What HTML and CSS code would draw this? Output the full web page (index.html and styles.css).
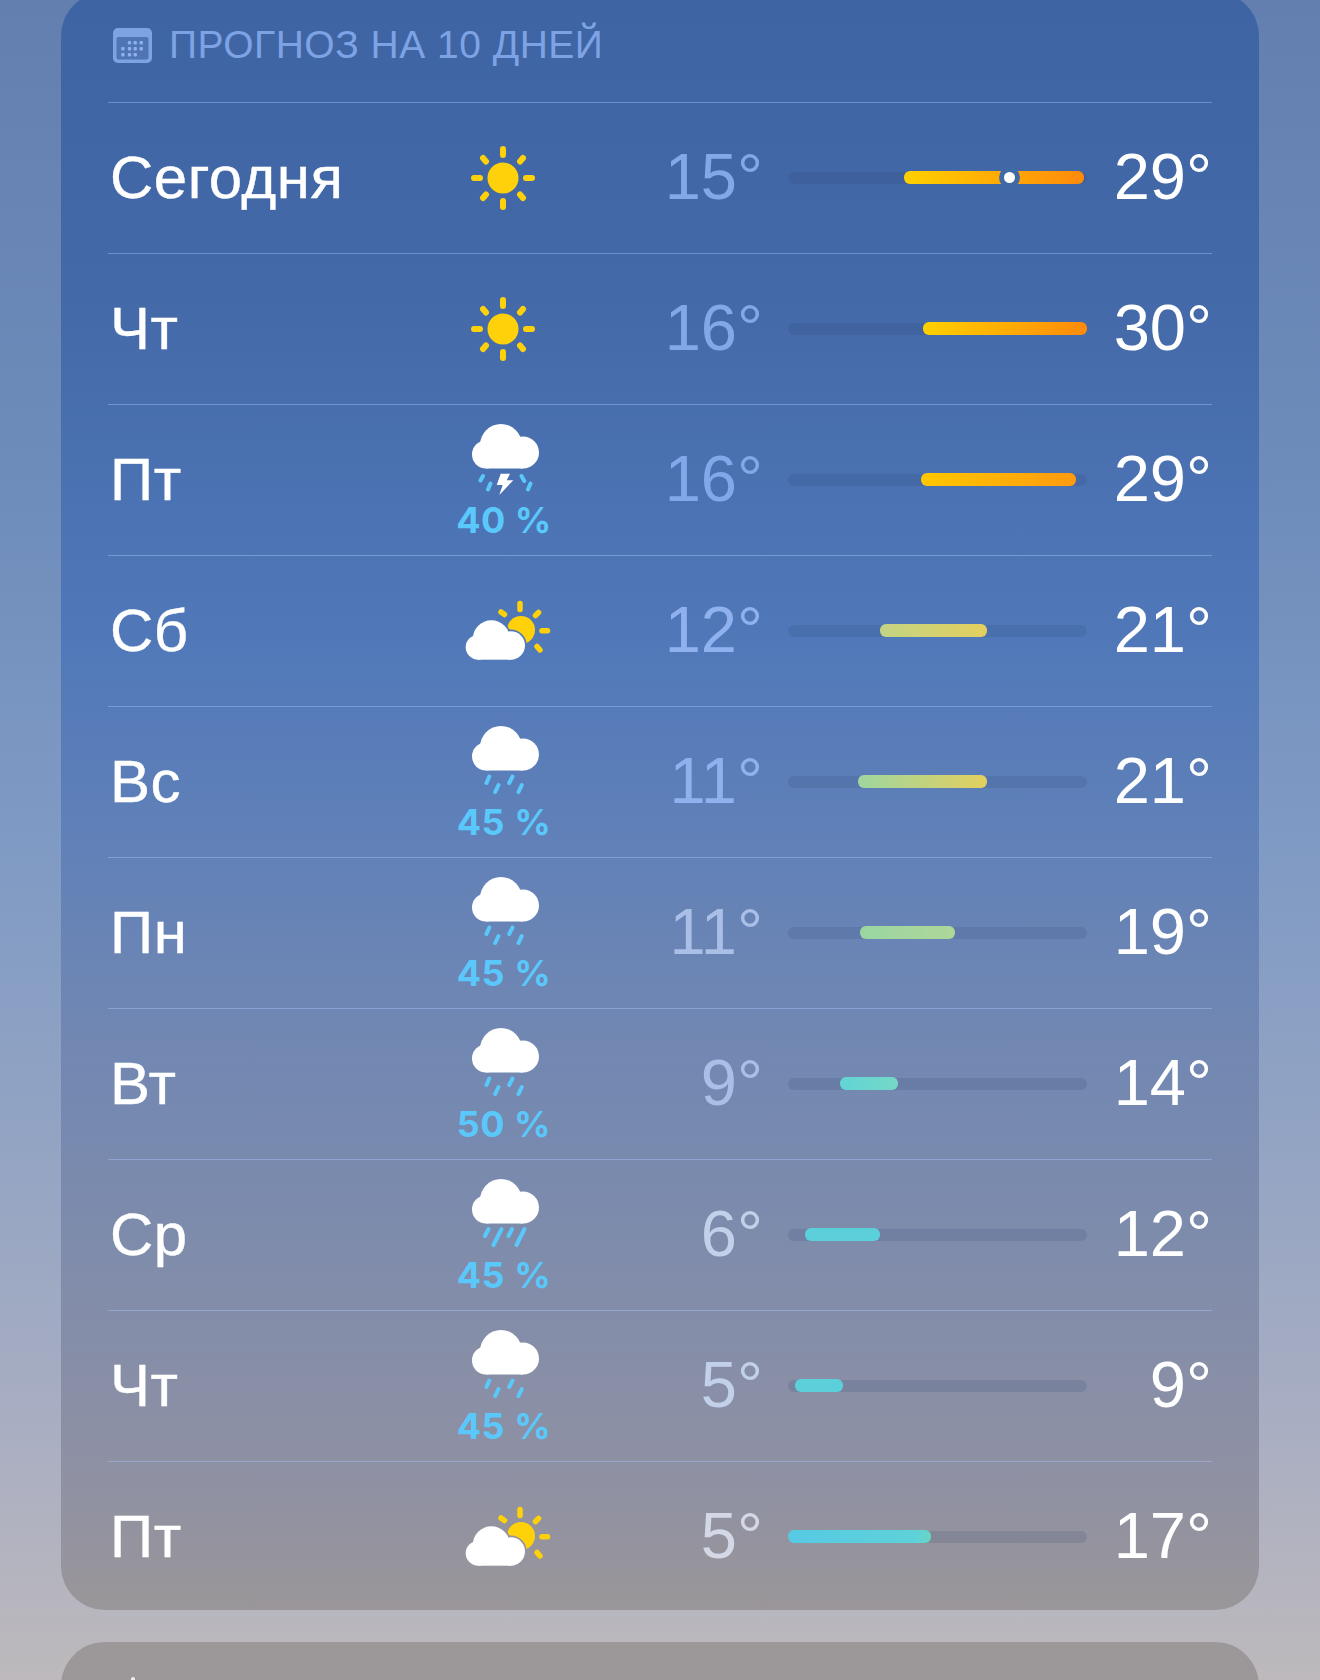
FILE: index.html
```html
<!DOCTYPE html>
<html lang="ru">
<head>
    <meta charset="UTF-8">
    <meta name="viewport" content="width=device-width, initial-scale=1.0">
    <title>Прогноз на 10 дней</title>
    <link rel="stylesheet" href="styles.css">
</head>
<body>
    <svg class="defs" width="0" height="0">
        <defs>
            <g id="sun">
                <circle cx="32" cy="32" r="15.500" fill="#ffd10a"/>
                <path d="M32 3v6M32 55v6M3 32h6M55 32h6M12 12l3 3.500M49 48.500l3 3.500M52 12l-3 3.500M15 48.500l-3 3.500" stroke="#ffd10a" stroke-width="6" stroke-linecap="round"/>
            </g>
            <g id="cloud">
                <circle cx="14" cy="30.500" r="14"/>
                <circle cx="29" cy="21" r="21"/>
                <circle cx="51" cy="28.500" r="16"/>
                <rect x="14" y="20" width="37" height="24.500"/>
            </g>
            <g id="rain" stroke="#5ac8fa" stroke-width="4" stroke-linecap="round">
                <path d="M17.300 50.500l-2.800 6.500M26.500 59l-3.300 7M40.500 50.500l-3.300 6.500M49.800 59l-3.300 7"/>
            </g>
            <g id="heavy-rain" stroke="#5ac8fa" stroke-width="4" stroke-linecap="round">
                <path d="M16.500 50l-3.500 7M29.500 50l-8 16M40 50l-3.500 7M52.500 50l-8 16"/>
            </g>
            <g id="thunder">
                <path d="M11 52l-2.500 4.500M18.500 59.500l-2.500 6M49.500 52l2.800 5M58.500 59.500l-2.500 6" stroke="#5ac8fa" stroke-width="4" stroke-linecap="round"/>
                <path d="M28.700 49.700H38l-3.300 6.600h6.600L27.300 71l3.400-10h-6z" fill="#fff"/>
            </g>
            <mask id="sun-cut" maskUnits="userSpaceOnUse" x="0" y="0" width="95" height="70">
                <rect width="95" height="70" fill="#fff"/>
                <use href="#cloud" transform="translate(4.700 25.300) scale(.885)" fill="#000" stroke="#000" stroke-width="4"/>
            </mask>
            <g id="partly">
                <circle cx="60" cy="35" r="14" fill="#ffd10a" mask="url(#sun-cut)"/>
                <path d="M59 8.500v6M77.500 17.500l-3 3M81 35.700h5.500M76 51.500l3 3.500M40 17l3.500 2.500" stroke="#ffd10a" stroke-width="5.500" stroke-linecap="round"/>
                <use href="#cloud" transform="translate(4.700 25.300) scale(.885)" fill="#fff"/>
            </g>
        </defs>
    </svg>

    <section class="card">
        <h2 class="card-title">
            <svg class="cal-icon" viewBox="0 0 39 35">
                <rect width="39" height="35" rx="5" fill="#7ea3e4"/>
                <rect x="3.500" y="9" width="32" height="22.500" rx="2" fill="#4f75b4"/>
                <g fill="#8fb0ea">
                    <rect x="14.800" y="13" width="3.400" height="3.400" rx="1"/><rect x="20.500" y="13" width="3.400" height="3.400" rx="1"/><rect x="26.500" y="13" width="3.400" height="3.400" rx="1"/>
                    <rect x="8.200" y="19" width="3.400" height="3.400" rx="1"/><rect x="14.800" y="19" width="3.400" height="3.400" rx="1"/><rect x="20.500" y="19" width="3.400" height="3.400" rx="1"/><rect x="26.500" y="19" width="3.400" height="3.400" rx="1"/>
                    <rect x="8.200" y="25" width="3.400" height="3.400" rx="1"/><rect x="14.800" y="25" width="3.400" height="3.400" rx="1"/><rect x="20.500" y="25" width="3.400" height="3.400" rx="1"/>
                </g>
            </svg>
            ПРОГНОЗ НА 10 ДНЕЙ
        </h2>

        <div class="rows">
            <div class="row">
                <span class="day">Сегодня</span>
                <div class="weather"><svg class="icon-sun" viewBox="0 0 64 64"><use href="#sun"/></svg></div>
                <span class="low low-1">15°</span>
                <div class="track"><div class="fill warm" style="left:38.800%;width:60.200%"><span class="now" style="left:58.500%"></span></div></div>
                <span class="high">29°</span>
            </div>
            <div class="row">
                <span class="day">Чт</span>
                <div class="weather"><svg class="icon-sun" viewBox="0 0 64 64"><use href="#sun"/></svg></div>
                <span class="low low-1">16°</span>
                <div class="track"><div class="fill warm" style="left:45.200%;width:54.800%"></div></div>
                <span class="high">30°</span>
            </div>
            <div class="row">
                <span class="day">Пт</span>
                <div class="weather"><svg class="icon-cloud" viewBox="0 0 67 74"><use href="#cloud" fill="#fff"/><use href="#thunder"/></svg><span class="chance">40 %</span></div>
                <span class="low low-1">16°</span>
                <div class="track"><div class="fill warm-short" style="left:44.500%;width:51.800%"></div></div>
                <span class="high">29°</span>
            </div>
            <div class="row">
                <span class="day">Сб</span>
                <div class="weather"><svg class="icon-partly" viewBox="0 0 95 70"><use href="#partly"/></svg></div>
                <span class="low low-2">12°</span>
                <div class="track"><div class="fill mild" style="left:30.700%;width:35.800%"></div></div>
                <span class="high">21°</span>
            </div>
            <div class="row">
                <span class="day">Вс</span>
                <div class="weather"><svg class="icon-cloud" viewBox="0 0 67 74"><use href="#cloud" fill="#fff"/><use href="#rain"/></svg><span class="chance">45 %</span></div>
                <span class="low low-2">11°</span>
                <div class="track"><div class="fill mild-cool" style="left:23.400%;width:43.100%"></div></div>
                <span class="high">21°</span>
            </div>
            <div class="row">
                <span class="day">Пн</span>
                <div class="weather"><svg class="icon-cloud" viewBox="0 0 67 74"><use href="#cloud" fill="#fff"/><use href="#rain"/></svg><span class="chance">45 %</span></div>
                <span class="low low-3">11°</span>
                <div class="track"><div class="fill cool" style="left:24.100%;width:31.800%"></div></div>
                <span class="high">19°</span>
            </div>
            <div class="row">
                <span class="day">Вт</span>
                <div class="weather"><svg class="icon-cloud" viewBox="0 0 67 74"><use href="#cloud" fill="#fff"/><use href="#rain"/></svg><span class="chance">50 %</span></div>
                <span class="low low-3">9°</span>
                <div class="track"><div class="fill teal" style="left:17.400%;width:19.400%"></div></div>
                <span class="high">14°</span>
            </div>
            <div class="row">
                <span class="day">Ср</span>
                <div class="weather"><svg class="icon-cloud" viewBox="0 0 67 74"><use href="#cloud" fill="#fff"/><use href="#heavy-rain"/></svg><span class="chance">45 %</span></div>
                <span class="low low-4">6°</span>
                <div class="track"><div class="fill cold" style="left:5.700%;width:25.100%"></div></div>
                <span class="high">12°</span>
            </div>
            <div class="row">
                <span class="day">Чт</span>
                <div class="weather"><svg class="icon-cloud" viewBox="0 0 67 74"><use href="#cloud" fill="#fff"/><use href="#rain"/></svg><span class="chance">45 %</span></div>
                <span class="low low-4">5°</span>
                <div class="track"><div class="fill cold" style="left:2.400%;width:15.900%"></div></div>
                <span class="high">9°</span>
            </div>
            <div class="row">
                <span class="day">Пт</span>
                <div class="weather"><svg class="icon-partly" viewBox="0 0 95 70"><use href="#partly"/></svg></div>
                <span class="low low-5">5°</span>
                <div class="track"><div class="fill cold-wide" style="left:0;width:47.800%"></div></div>
                <span class="high">17°</span>
            </div>
        </div>
    </section>

    <section class="card-next"><div class="next-icon"></div></section>
</body>
</html>
```

FILE: styles.css
```css
* {
    margin: 0;
    padding: 0;
    box-sizing: border-box;
}

html, body {
    height: 1680px;
    overflow: hidden;
}

body {
    font-family: 'Liberation Sans', Arial, sans-serif;
    background: linear-gradient(180deg, #627fb0 0%, #6f8dbb 30%, #7f9ac4 50%, #93a4c3 68%, #a9aec2 85%, #bdb9bc 100%);
    padding: 0 61px;
}

.defs {
    position: absolute;
}

.card {
    height: 1618px;
    margin-top: -8px;
    padding: 8px 47px 0;
    border-radius: 44px;
    background: linear-gradient(180deg, #3e64a3 0, #4469a8 300px, #5078b9 640px, #5f80b8 830px, #7087b3 1030px, #7f8cab 1260px, #8f91a3 1490px, #9a9699 1618px);
}

.card-title {
    height: 102px;
    display: flex;
    align-items: flex-start;
    gap: 17px;
    padding-top: 23px;
    padding-left: 5px;
    font-size: 39px;
    line-height: 44px;
    font-weight: normal;
    letter-spacing: 0.5px;
    color: #7ea3e4;
    white-space: nowrap;
}

.cal-icon {
    width: 39px;
    height: 35px;
    margin-top: 5px;
}

.row {
    height: 151px;
    border-top: 1px solid rgba(170, 200, 255, 0.42);
    display: flex;
    align-items: center;
    font-size: 60px;
    color: #fff;
}

.day {
    width: 319px;
    padding-left: 2px;
    letter-spacing: 0.5px;
    margin-top: -2px;
    -webkit-text-stroke: 0.4px #fff;
}

.weather {
    width: 154px;
    display: flex;
    flex-direction: column;
    align-items: center;
}

.icon-sun {
    width: 64px;
    height: 64px;
    margin-right: 2px;
}

.icon-cloud {
    width: 67px;
    height: 74px;
    margin-left: 2px;
}

.icon-partly {
    width: 95px;
    height: 70px;
    margin: 0 0 3px 8px;
}

.chance {
    font-family: Inter, 'Liberation Sans', sans-serif;
    font-size: 36px;
    line-height: 34px;
    font-weight: bold;
    color: #5ac8fa;
    letter-spacing: 0.5px;
    margin-top: 5px;
}

.low {
    width: 182px;
    text-align: right;
    font-size: 65px;
    margin-top: -3px;
}

.low-1 { color: #82a8ea; }
.low-2 { color: #8fb2ee; }
.low-3 { color: #a9bfe6; }
.low-4 { color: #c3d0ea; }
.low-5 { color: #d4d7e6; }

.track {
    position: relative;
    width: 299px;
    height: 12px;
    margin-left: 25px;
    border-radius: 6px;
    background: rgba(40, 60, 110, 0.15);
}

.fill {
    position: absolute;
    top: -1px;
    bottom: 0;
    border-radius: 6px;
}

.warm { background: linear-gradient(90deg, #ffd000 0%, #ff8a0a 100%); }
.warm-short { background: linear-gradient(90deg, #ffc800 0%, #ff9a10 100%); }
.mild { background: linear-gradient(90deg, #c4d484 0%, #e3cf5e 100%); }
.mild-cool { background: linear-gradient(90deg, #9fd6a0 0%, #e3cf5e 100%); }
.cool { background: linear-gradient(90deg, #9ad6a2 0%, #aed698 100%); }
.teal { background: linear-gradient(90deg, #62d4d6 0%, #74d8c6 100%); }
.cold { background: #5bd0da; }
.cold-wide { background: linear-gradient(90deg, #57c9e4 0%, #5ed2d8 90%, #68d6c4 100%); }

.now {
    position: absolute;
    top: 50%;
    width: 21px;
    height: 21px;
    margin: -10.500px 0 0 -10.500px;
    border-radius: 50%;
    background: #fff;
    border: 5px solid #4069a8;
}

.high {
    flex: 1;
    margin-top: -3px;
    text-align: right;
    font-size: 65px;
}

.card-next {
    height: 80px;
    margin-top: 32px;
    padding: 35px 0 0 70px;
    border-radius: 44px 44px 0 0;
    background: #9c9799;
}

.next-icon {
    width: 4px;
    height: 6px;
    border-radius: 2px 2px 0 0;
    background: #eeeeee;
}
```
